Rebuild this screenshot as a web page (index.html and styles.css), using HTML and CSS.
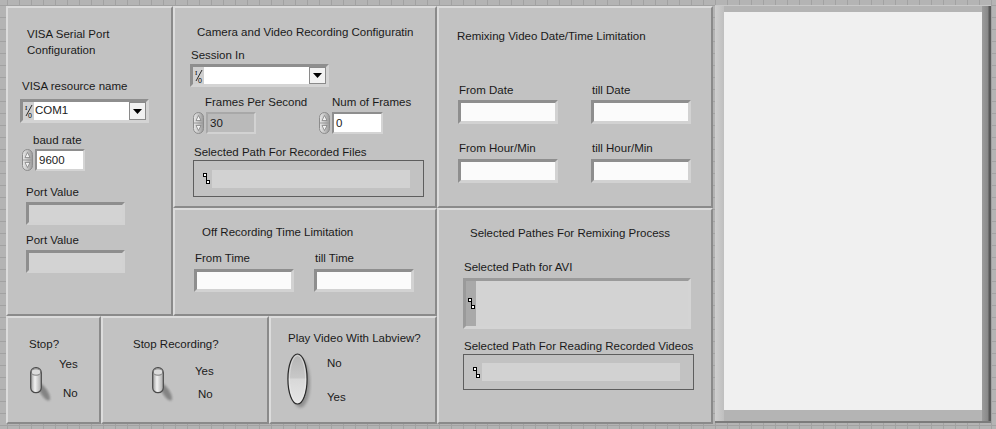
FILE: index.html
```html
<!DOCTYPE html>
<html>
<head>
<meta charset="utf-8">
<link rel="stylesheet" href="styles.css">
</head>
<body>
<div class="front">
  <section class="panel p-visa">
    <div class="visa-title">VISA Serial Port<br>Configuration</div>
    <div class="lbl l-resource">VISA resource name</div>
    <div class="combo combo-visa">
      <span class="io"><svg width="10" height="16" viewBox="0 0 10 16"><text x="1" y="7" font-size="7" font-family="Liberation Serif, serif">I</text><line x1="8" y1="2" x2="2" y2="13" stroke="#000" stroke-width="0.8"/><text x="4" y="15" font-size="7" font-family="Liberation Sans, sans-serif">0</text></svg></span>
      <span class="combo-field">COM1</span>
      <span class="combo-btn"><svg width="9" height="5" viewBox="0 0 9 5"><path d="M0 0H9L4.5 5Z" fill="#000"/></svg></span>
    </div>
    <div class="lbl l-baud">baud rate</div>
    <div class="num n-baud">
      <svg class="spin" width="11" height="22" viewBox="0 0 11 22"><defs><linearGradient id="sg1" x1="0" x2="1"><stop offset="0" stop-color="#eaeaea"/><stop offset="1" stop-color="#9a9a9a"/></linearGradient></defs><rect x="0.5" y="0.5" width="10" height="21" rx="5" fill="url(#sg1)" stroke="#8c8c8c"/><line x1="1" y1="11" x2="10" y2="11" stroke="#9a9a9a"/><path d="M5.5 3.5L8 8.5H3Z" fill="#f2f2f2" stroke="#7a7a7a" stroke-width="0.7"/><path d="M5.5 18.5L8 13.5H3Z" fill="#f2f2f2" stroke="#7a7a7a" stroke-width="0.7"/></svg>
      <span class="num-box">9600</span>
    </div>
    <div class="lbl l-port">Port Value</div>
    <div class="ind ind-port"></div>
    <div class="lbl l-port2">Port Value</div>
    <div class="ind ind-port2"></div>
  </section>

  <section class="panel p-camera">
    <div class="lbl cam-title">Camera and Video Recording Configuratin</div>
    <div class="lbl l-session">Session In</div>
    <div class="combo combo-session">
      <span class="io"><svg width="10" height="16" viewBox="0 0 10 16"><text x="1" y="7" font-size="7" font-family="Liberation Serif, serif">I</text><line x1="8" y1="2" x2="2" y2="13" stroke="#000" stroke-width="0.8"/><text x="4" y="15" font-size="7" font-family="Liberation Sans, sans-serif">0</text></svg></span>
      <span class="combo-field"></span>
      <span class="combo-btn"><svg width="9" height="5" viewBox="0 0 9 5"><path d="M0 0H9L4.5 5Z" fill="#000"/></svg></span>
    </div>
    <div class="frames-row">
      <div class="fcol fcol-fps">
        <div class="lbl l-fps">Frames Per Second</div>
        <div class="num">
          <svg class="spin" width="11" height="22" viewBox="0 0 11 22"><defs><linearGradient id="sg2" x1="0" x2="1"><stop offset="0" stop-color="#eaeaea"/><stop offset="1" stop-color="#9a9a9a"/></linearGradient></defs><rect x="0.5" y="0.5" width="10" height="21" rx="5" fill="url(#sg2)" stroke="#8c8c8c"/><line x1="1" y1="11" x2="10" y2="11" stroke="#9a9a9a"/><path d="M5.5 3.5L8 8.5H3Z" fill="#f2f2f2" stroke="#7a7a7a" stroke-width="0.7"/><path d="M5.5 18.5L8 13.5H3Z" fill="#f2f2f2" stroke="#7a7a7a" stroke-width="0.7"/></svg>
          <span class="num-box num-off">30</span>
        </div>
      </div>
      <div class="fcol fcol-num">
        <div class="lbl l-nframes">Num of Frames</div>
        <div class="num">
          <svg class="spin" width="11" height="22" viewBox="0 0 11 22"><defs><linearGradient id="sg3" x1="0" x2="1"><stop offset="0" stop-color="#eaeaea"/><stop offset="1" stop-color="#9a9a9a"/></linearGradient></defs><rect x="0.5" y="0.5" width="10" height="21" rx="5" fill="url(#sg3)" stroke="#8c8c8c"/><line x1="1" y1="11" x2="10" y2="11" stroke="#9a9a9a"/><path d="M5.5 3.5L8 8.5H3Z" fill="#f2f2f2" stroke="#7a7a7a" stroke-width="0.7"/><path d="M5.5 18.5L8 13.5H3Z" fill="#f2f2f2" stroke="#7a7a7a" stroke-width="0.7"/></svg>
          <span class="num-box num-frames">0</span>
        </div>
      </div>
    </div>
    <div class="lbl l-recpath">Selected Path For Recorded Files</div>
    <div class="pathbox pb-rec">
      <svg class="picon" width="7" height="11" viewBox="0 0 7 11"><rect x="0.5" y="0.5" width="3" height="3" fill="#fff" stroke="#000"/><path d="M3.5 3.5V7.5" stroke="#000"/><rect x="3.5" y="7.5" width="3" height="3" fill="#fff" stroke="#000"/></svg>
      <span class="pstrip"></span>
    </div>
  </section>

  <section class="panel p-off">
    <div class="lbl off-title">Off Recording Time Limitation</div>
    <div class="pair-row off-row">
      <div class="pcol"><div class="lbl">From Time</div><div class="tbox"></div></div>
      <div class="pcol"><div class="lbl">till Time</div><div class="tbox"></div></div>
    </div>
  </section>

  <section class="panel p-remix">
    <div class="lbl remix-title">Remixing Video Date/Time Limitation</div>
    <div class="pair-row remix-row1">
      <div class="pcol"><div class="lbl">From Date</div><div class="tbox"></div></div>
      <div class="pcol"><div class="lbl">till Date</div><div class="tbox"></div></div>
    </div>
    <div class="pair-row remix-row2">
      <div class="pcol"><div class="lbl">From Hour/Min</div><div class="tbox"></div></div>
      <div class="pcol"><div class="lbl">till Hour/Min</div><div class="tbox"></div></div>
    </div>
  </section>

  <section class="panel p-paths">
    <div class="lbl paths-title">Selected Pathes For Remixing Process</div>
    <div class="lbl l-avi">Selected Path for AVI</div>
    <div class="avibox">
      <span class="avi-side"><svg class="picon" width="7" height="11" viewBox="0 0 7 11"><rect x="0.5" y="0.5" width="3" height="3" fill="#fff" stroke="#000"/><path d="M3.5 3.5V7.5" stroke="#000"/><rect x="3.5" y="7.5" width="3" height="3" fill="#fff" stroke="#000"/></svg></span>
      <span class="avi-field"></span>
    </div>
    <div class="lbl l-read">Selected Path For Reading Recorded Videos</div>
    <div class="pathbox pb-read">
      <svg class="picon" width="7" height="11" viewBox="0 0 7 11"><rect x="0.5" y="0.5" width="3" height="3" fill="#fff" stroke="#000"/><path d="M3.5 3.5V7.5" stroke="#000"/><rect x="3.5" y="7.5" width="3" height="3" fill="#fff" stroke="#000"/></svg>
      <span class="pstrip"></span>
    </div>
  </section>

  <section class="panel p-stop">
    <div class="lbl stop-title">Stop?</div>
    <div class="sw-row stop-row">
      <svg class="toggle" width="22" height="36" viewBox="0 0 22 36"><defs><linearGradient id="tg1" x1="0" x2="1"><stop offset="0" stop-color="#9c9c9c"/><stop offset="0.4" stop-color="#f2f2f2"/><stop offset="1" stop-color="#a8a8a8"/></linearGradient><filter id="tb1"><feGaussianBlur stdDeviation="1.2"/></filter></defs><ellipse cx="14" cy="25" rx="3.5" ry="10" transform="rotate(-32 14 25)" fill="#6a6a6a" opacity="0.7" filter="url(#tb1)"/><rect x="0.7" y="0.7" width="10.6" height="25" rx="5" fill="url(#tg1)" stroke="#4a4a4a" stroke-width="1.2"/><ellipse cx="6" cy="5" rx="4.6" ry="3.2" fill="#dcdcdc" stroke="#666" stroke-width="0.8"/></svg>
      <div class="sw-labels">
        <div class="lbl">Yes</div>
        <div class="lbl stop-no">No</div>
      </div>
    </div>
  </section>

  <section class="panel p-stoprec">
    <div class="lbl stoprec-title">Stop Recording?</div>
    <div class="sw-row stoprec-row">
      <svg class="toggle" width="22" height="36" viewBox="0 0 22 36"><defs><linearGradient id="tg2" x1="0" x2="1"><stop offset="0" stop-color="#9c9c9c"/><stop offset="0.4" stop-color="#f2f2f2"/><stop offset="1" stop-color="#a8a8a8"/></linearGradient><filter id="tb2"><feGaussianBlur stdDeviation="1.2"/></filter></defs><ellipse cx="14" cy="25" rx="3.5" ry="10" transform="rotate(-32 14 25)" fill="#6a6a6a" opacity="0.7" filter="url(#tb2)"/><rect x="0.7" y="0.7" width="10.6" height="25" rx="5" fill="url(#tg2)" stroke="#4a4a4a" stroke-width="1.2"/><ellipse cx="6" cy="5" rx="4.6" ry="3.2" fill="#dcdcdc" stroke="#666" stroke-width="0.8"/></svg>
      <div class="sw-labels">
        <div class="lbl">Yes</div>
        <div class="lbl stoprec-no">No</div>
      </div>
    </div>
  </section>

  <section class="panel p-play">
    <div class="lbl play-title">Play Video With Labview?</div>
    <div class="sw-row play-row">
      <svg class="oval" width="25" height="57" viewBox="0 0 25 57"><defs><linearGradient id="og" x1="0" y1="0" x2="0" y2="1"><stop offset="0" stop-color="#b4b4b4"/><stop offset="0.48" stop-color="#c8c8c8"/><stop offset="0.5" stop-color="#d8d8d8"/><stop offset="1" stop-color="#e6e6e6"/></linearGradient><filter id="ob"><feGaussianBlur stdDeviation="1.5"/></filter></defs><ellipse cx="13.5" cy="30" rx="9.5" ry="24.5" fill="#7a7a7a" opacity="0.7" filter="url(#ob)"/><ellipse cx="10.5" cy="26" rx="9.6" ry="25" fill="url(#og)" stroke="#2a2a2a" stroke-width="1.2"/><ellipse cx="10.5" cy="26" rx="8" ry="23.4" fill="none" stroke="#efefef" stroke-width="0.8" opacity="0.7"/></svg>
      <div class="sw-labels play-labels">
        <div class="lbl">No</div>
        <div class="lbl play-yes">Yes</div>
      </div>
    </div>
  </section>

  <div class="display"><div class="display-inner"></div></div>
</div>
</body>
</html>
```

FILE: styles.css
```css
html, body {
  margin: 0;
  padding: 0;
}
body {
  width: 996px;
  height: 429px;
  overflow: hidden;
  background-color: #b4b4b4;
  background-image:
    linear-gradient(#a2a2a2 1px, transparent 1px),
    linear-gradient(90deg, #a2a2a2 1px, transparent 1px);
  background-size: 12px 12px;
  background-position: 7px 5px;
  font-family: "Liberation Sans", Arial, sans-serif;
  font-size: 11.5px;
  color: #1a1a1a;
}
.front {
  display: grid;
  grid-template-columns: 95px 72px 96px 168px 276px 2px 276px;
  grid-template-rows: 202px 108px 108px;
  padding: 6px 0 0 6px;
}
.panel {
  box-sizing: border-box;
  background: #c2c2c2;
  border: 2px solid;
  border-color: #dcdcdc #8a8a8a #8a8a8a #dcdcdc;
  overflow: hidden;
}
.p-visa { grid-column: 1 / 3; grid-row: 1 / 3; }
.p-camera { grid-column: 3 / 5; grid-row: 1; }
.p-off { grid-column: 3 / 5; grid-row: 2; }
.p-remix { grid-column: 5; grid-row: 1; }
.p-paths { grid-column: 5; grid-row: 2 / 4; }
.p-stop { grid-column: 1; grid-row: 3; }
.p-stoprec { grid-column: 2 / 4; grid-row: 3; }
.p-play { grid-column: 4; grid-row: 3; }

.lbl {
  line-height: 14px;
  height: 14px;
  white-space: nowrap;
}

/* generic controls */
.combo {
  box-sizing: border-box;
  display: flex;
  align-items: stretch;
  border: 3px solid;
  border-color: #8e8e8e #d4d4d4 #d4d4d4 #8e8e8e;
  background: #d0d0d0;
}
.io {
  width: 11px;
  display: flex;
  align-items: center;
  justify-content: center;
}
.combo-field {
  flex: 1;
  background: #fff;
  line-height: 17px;
  padding-left: 1px;
}
.combo-btn {
  box-sizing: border-box;
  width: 17px;
  background: #f2f2f2;
  border: 1px solid #8a8a8a;
  display: flex;
  align-items: center;
  justify-content: center;
}
.num {
  display: flex;
  align-items: center;
  gap: 2px;
}
.spin { display: block; }
.num-box {
  box-sizing: border-box;
  width: 50px;
  height: 22px;
  border: 2px solid;
  border-color: #8e8e8e #d4d4d4 #d4d4d4 #8e8e8e;
  background: #fff;
  line-height: 18px;
  padding-left: 2px;
}
.num-off {
  background: #bababa;
  border-color: #a8a8a8 #d2d2d2 #d2d2d2 #a8a8a8;
}
.ind, .tbox {
  box-sizing: border-box;
  border: 3px solid;
  border-color: #8e8e8e #d2d2d2 #d2d2d2 #8e8e8e;
}
.ind { background: #d3d3d3; width: 99px; height: 23px; }
.tbox { background: #fbfbfb; width: 100px; height: 24px; }

.pathbox {
  box-sizing: border-box;
  display: flex;
  align-items: center;
  border: 1px solid #5e5e5e;
  background: #c2c2c2;
}
.picon { display: block; }
.pstrip {
  display: block;
  background: #d2d2d2;
  height: 18px;
}

/* VISA panel */
.visa-title { margin: 18px 0 0 19px; line-height: 16px; }
.l-resource { margin: 21px 0 0 14px; }
.combo-visa { margin: 6px 0 0 12px; width: 129px; height: 24px; }
.l-baud { margin: 10px 0 0 25px; }
.n-baud { margin: 2px 0 0 14px; }
.l-port { margin: 14px 0 0 18px; }
.ind-port { margin: 3px 0 0 18px; }
.l-port2 { margin: 8px 0 0 18px; }
.ind-port2 { margin: 3px 0 0 18px; }

/* Camera panel */
.cam-title { margin: 17px 0 0 22px; }
.l-session { margin: 9px 0 0 16px; }
.combo-session { margin: 2px 0 0 15px; width: 139px; height: 23px; }
.frames-row { display: flex; margin: 8px 0 0 18px; }
.fcol-fps { width: 126px; }
.fcol .num { margin-top: 3px; }
.l-fps { padding-left: 12px; }
.l-nframes { padding-left: 13px; }
.num-frames { width: 51px; }
.l-recpath { margin: 11px 0 0 19px; }
.pb-rec { margin: 1px 0 0 18px; width: 231px; height: 37px; padding-left: 9px; gap: 2px; }
.pb-rec .pstrip { width: 198px; }

/* Off recording */
.off-title { margin: 15px 0 0 27px; }
.pair-row { display: flex; }
.pcol .lbl { padding-left: 1px; }
.pcol .tbox { margin-top: 4px; }
.off-row { margin: 12px 0 0 19px; gap: 20px; }
.off-row .tbox { height: 23px; }

/* Remix */
.remix-title { margin: 21px 0 0 18px; }
.remix-row1 { margin: 40px 0 0 19px; gap: 33px; }
.remix-row1 .tbox { margin-top: 3px; }
.remix-row2 { margin: 17px 0 0 19px; gap: 33px; }

/* Paths */
.paths-title { margin: 16px 0 0 31px; }
.l-avi { margin: 20px 0 0 25px; }
.avibox {
  box-sizing: border-box;
  display: flex;
  margin: 4px 0 0 24px;
  width: 228px;
  height: 51px;
  border: 3px solid;
  border-color: #9a9a9a #d4d4d4 #d4d4d4 #9a9a9a;
  background: #d3d3d3;
}
.avi-side {
  width: 10px;
  background: #a9a9a9;
  display: flex;
  align-items: center;
  justify-content: center;
}
.avi-field { flex: 1; }
.l-read { margin: 10px 0 0 25px; }
.pb-read { margin: 1px 0 0 24px; width: 231px; height: 36px; padding-left: 9px; gap: 2px; }
.pb-read .pstrip { width: 198px; }

/* switches */
.sw-row { display: flex; align-items: flex-start; }
.toggle, .oval { display: block; }
.stop-title { margin: 19px 0 0 21px; }
.stop-row { margin: 6px 0 0 22px; }
.stop-row .toggle { margin-top: 10px; }
.stop-row .sw-labels { margin-left: 7px; }
.stop-no { margin-top: 15px; padding-left: 4px; }

.stoprec-title { margin: 19px 0 0 30px; }
.stoprec-row { margin: 13px 0 0 49px; }
.stoprec-row .toggle { margin-top: 3px; }
.stoprec-row .sw-labels { margin-left: 21px; }
.stoprec-no { margin-top: 9px; padding-left: 3px; }

.play-title { margin: 13px 0 0 17px; }
.play-row { margin: 8px 0 0 16px; }
.play-labels { margin-left: 15px; padding-top: 3px; }
.play-yes { margin-top: 20px; }

/* image display */
.display {
  grid-column: 7;
  grid-row: 1 / 4;
  margin-top: -1px;
  height: 418px;
  box-sizing: border-box;
  padding: 6px 9px 11px 9px;
  border-top: 1px solid #c8c8c8;
  border-bottom: 2px solid #7c7c7c;
  background: linear-gradient(to right,
    #cfcfcf 0px, #bfbfbf 9px, #b4b4b4 9px, #b4b4b4 267px,
    #9c9c9c 267px, #888888 273px, #585858 274px, #585858 276px);
}
.display-inner {
  height: 100%;
  background: #f0f0f0;
}
```
